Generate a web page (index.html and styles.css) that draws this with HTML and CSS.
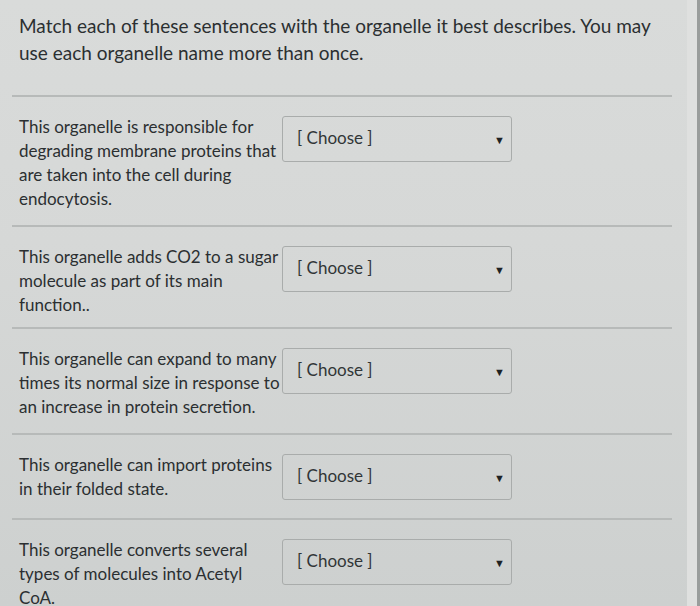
FILE: index.html
```html
<!DOCTYPE html>
<html>
<head>
<meta charset="utf-8">
<link rel="stylesheet" href="styles.css">
</head>
<body>
<div class="page">
  <div class="question">
    <p class="prompt">Match each of these sentences with the organelle it best describes. You may use each organelle name more than once.</p>
  </div>
  <div class="row">
    <div class="desc">This organelle is responsible for degrading membrane proteins that are taken into the cell during endocytosis.</div>
    <div class="select"><span>[ Choose ]</span><span class="arrow">&#9660;</span></div>
  </div>
  <div class="row row-tight">
    <div class="desc">This organelle adds CO2 to a sugar molecule as part of its main function..</div>
    <div class="select"><span>[ Choose ]</span><span class="arrow">&#9660;</span></div>
  </div>
  <div class="row">
    <div class="desc">This organelle can expand to many times its normal size in response to an increase in protein secretion.</div>
    <div class="select"><span>[ Choose ]</span><span class="arrow">&#9660;</span></div>
  </div>
  <div class="row row-short">
    <div class="desc">This organelle can import proteins in their folded state.</div>
    <div class="select"><span>[ Choose ]</span><span class="arrow">&#9660;</span></div>
  </div>
  <div class="row">
    <div class="desc">This organelle converts several types of molecules into Acetyl CoA.</div>
    <div class="select"><span>[ Choose ]</span><span class="arrow">&#9660;</span></div>
  </div>
</div>
</body>
</html>
```
FILE: styles.css
```css
html, body {
  margin: 0;
  padding: 0;
  height: 100%;
  overflow: hidden;
}
body {
  background: #7f8281;
  font-family: Lato, "Open Sans", sans-serif;
  color: #2b2f31;
}
.page {
  width: 687px;
  height: 606px;
  border-right: 10px solid #dfe0df;
  box-shadow: 3px 0 0 #9a9d9c;
  background: linear-gradient(180deg, #d9dbda 0%, #d6d8d7 40%, #cdd0cf 100%);
  box-sizing: content-box;
}
.question {
  padding: 12px 0 29px 7px;
  border-bottom: 2px solid #b7bab9;
  margin-left: 12px;
  margin-right: 15px;
}
.prompt {
  margin: 0;
  font-size: 19px;
  line-height: 27px;
}
.row {
  display: flex;
  align-items: flex-start;
  gap: 2px;
  padding: 18px 0 14px 7px;
  margin-left: 12px;
  margin-right: 15px;
  border-bottom: 2px solid #b7bab9;
}
.row-tight {
  padding-bottom: 10px;
}
.row-short {
  padding-bottom: 17px;
}
.desc {
  width: 261px;
  font-size: 17px;
  line-height: 24px;
}
.select {
  width: 230px;
  height: 46px;
  box-sizing: border-box;
  margin-top: 1px;
  border: 1px solid #a9acab;
  border-radius: 3px;
  display: flex;
  align-items: center;
  justify-content: space-between;
  padding: 0 6px 0 14px;
  font-size: 17px;
  color: #313537;
}
.select span:first-child {
  margin-top: -4px;
}
.arrow {
  font-size: 11px;
  color: #1e2224;
}
```
